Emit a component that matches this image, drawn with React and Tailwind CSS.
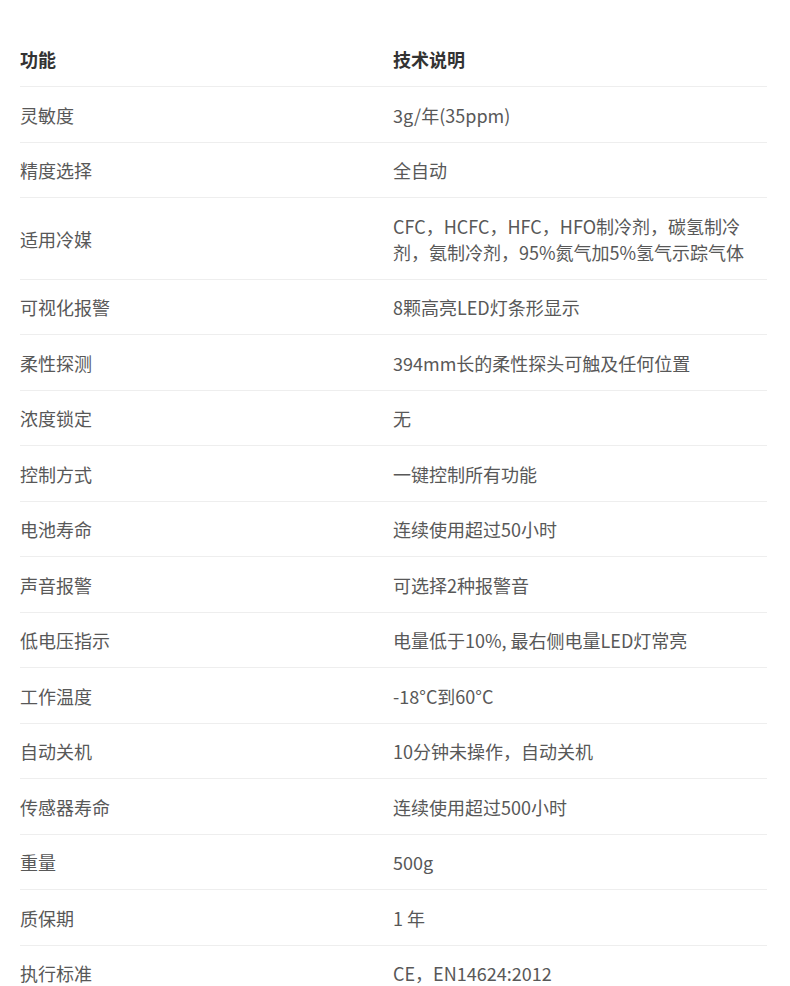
const rows = [
  ['灵敏度', ['3g/年(35ppm)']],
  ['精度选择', ['全自动']],
  ['适用冷媒', ['CFC，HCFC，HFC，HFO制冷剂，碳氢制冷', '剂，氨制冷剂，95%氮气加5%氢气示踪气体']],
  ['可视化报警', ['8颗高亮LED灯条形显示']],
  ['柔性探测', ['394mm长的柔性探头可触及任何位置']],
  ['浓度锁定', ['无']],
  ['控制方式', ['一键控制所有功能']],
  ['电池寿命', ['连续使用超过50小时']],
  ['声音报警', ['可选择2种报警音']],
  ['低电压指示', ['电量低于10%, 最右侧电量LED灯常亮']],
  ['工作温度', ['-18°C到60°C']],
  ['自动关机', ['10分钟未操作，自动关机']],
  ['传感器寿命', ['连续使用超过500小时']],
  ['重量', ['500g']],
  ['质保期', ['1 年']],
  ['执行标准', ['CE，EN14624:2012']],
];

export default function App() {
  return (
    <div className="min-h-[986px] bg-white pl-[20px] pt-[31.5px] font-['Noto_Sans_CJK_SC','Noto_Sans',sans-serif] text-[18px] text-[#585858]">
      <div className="w-[747px]">
        {/* header */}
        <div className="flex border-b border-[#eeeeee] pt-[14.5px] pb-[14px] leading-[26px] font-bold text-[#333]">
          <div className="w-[373px] shrink-0">功能</div>
          <div>技术说明</div>
        </div>
        {rows.map(([name, desc]) => (
          <div
            key={name}
            className="flex border-b border-[#eeeeee] pt-[14.5px] pb-[14px] leading-[26px]"
          >
            <div className="flex w-[373px] shrink-0 items-center">{name}</div>
            <div>
              {desc.map((line) => (
                <div key={line}>{line}</div>
              ))}
            </div>
          </div>
        ))}
      </div>
    </div>
  );
}
